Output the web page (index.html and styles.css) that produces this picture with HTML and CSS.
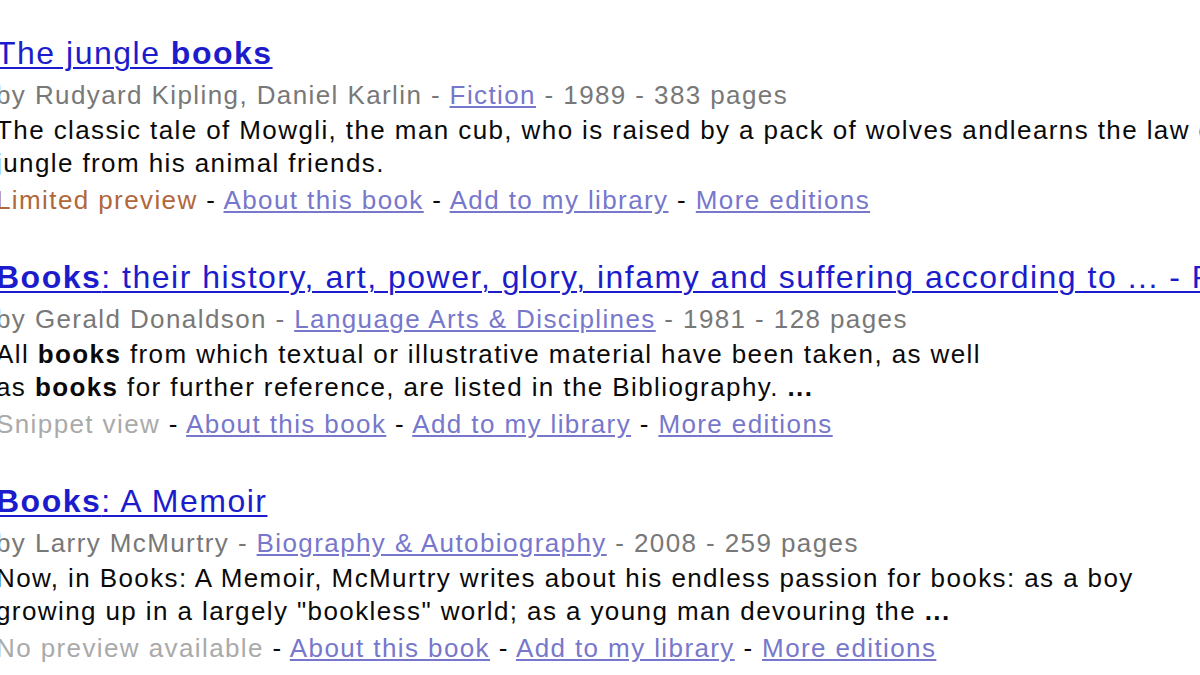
FILE: index.html
```html
<!DOCTYPE html>
<html>
<head>
<meta charset="utf-8">
<link rel="stylesheet" href="styles.css">
</head>
<body>
<div class="results">
  <div class="result">
    <div class="title"><a href="#">The jungle <b>books</b></a></div>
    <div class="meta">by Rudyard Kipling, Daniel Karlin - <a href="#">Fiction</a> - 1989 - 383 pages</div>
    <div class="desc">The classic tale of Mowgli, the man cub, who is raised by a pack of wolves andlearns the law of the<br>jungle from his animal friends.</div>
    <div class="links"><span class="limited">Limited preview</span> - <a href="#">About this book</a> - <a href="#">Add to my library</a> - <a href="#">More editions</a></div>
  </div>
  <div class="result">
    <div class="title"><a href="#"><b>Books</b>: their history, art, power, glory, infamy and suffering according to ... - Page 11</a></div>
    <div class="meta">by Gerald Donaldson - <a href="#">Language Arts &amp; Disciplines</a> - 1981 - 128 pages</div>
    <div class="desc">All <b>books</b> from which textual or illustrative material have been taken, as well<br>as <b>books</b> for further reference, are listed in the Bibliography. <b>...</b></div>
    <div class="links"><span class="avail">Snippet view</span> - <a href="#">About this book</a> - <a href="#">Add to my library</a> - <a href="#">More editions</a></div>
  </div>
  <div class="result">
    <div class="title"><a href="#"><b>Books</b>: A Memoir</a></div>
    <div class="meta">by Larry McMurtry - <a href="#">Biography &amp; Autobiography</a> - 2008 - 259 pages</div>
    <div class="desc">Now, in Books: A Memoir, McMurtry writes about his endless passion for books: as a boy<br>growing up in a largely "bookless" world; as a young man devouring the <b>...</b></div>
    <div class="links"><span class="avail">No preview available</span> - <a href="#">About this book</a> - <a href="#">Add to my library</a> - <a href="#">More editions</a></div>
  </div>
</div>
</body>
</html>
```
FILE: styles.css
```css
html, body {
  margin: 0;
  padding: 0;
  background: #fff;
  overflow: hidden;
}
body {
  font-family: "Liberation Sans", Arial, sans-serif;
  color: #000;
}
.results {
  padding-top: 33px;
  margin-left: -4px;
  width: 1300px;
}
.result {
  margin-bottom: 40px;
}
.title {
  font-size: 32px;
  line-height: 40px;
  letter-spacing: 1.5px;
  white-space: nowrap;
  width: 1204px;
  overflow: hidden;
}
.title a {
  color: #1c1ccc;
  text-decoration: underline;
  text-decoration-thickness: 2px;
  text-underline-offset: 3px;
}
.meta, .desc, .links {
  font-size: 26px;
  letter-spacing: 1.4px;
  white-space: nowrap;
}
.meta {
  line-height: 34px;
  margin-top: 5px;
  margin-bottom: 2px;
  color: #787878;
}
.meta a, .links a {
  color: #7777cc;
}
.desc {
  line-height: 33px;
  color: #0a0a0a;
}
.links {
  line-height: 33px;
  margin-top: 4px;
  color: #0a0a0a;
}
.limited {
  color: #b0673c;
}
.avail {
  color: #aaaaaa;
}
```
